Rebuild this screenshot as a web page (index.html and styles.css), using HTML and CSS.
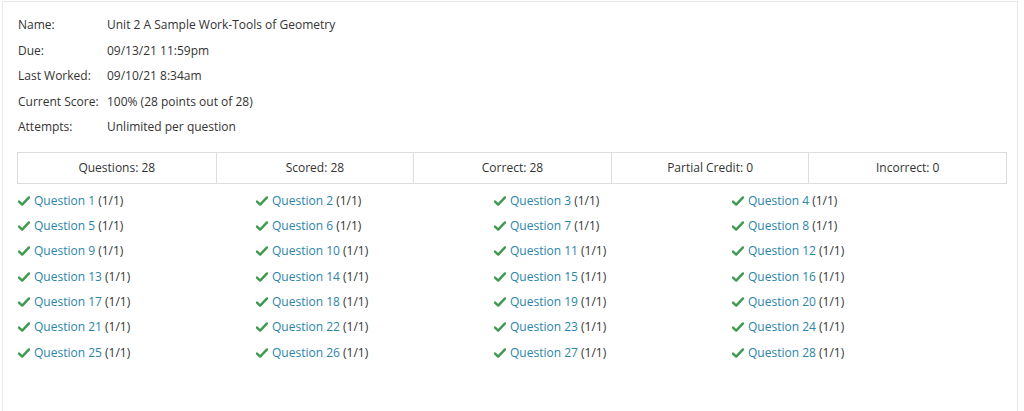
FILE: index.html
```html
<!DOCTYPE html>
<html>
<head>
<meta charset="utf-8">
<link rel="stylesheet" href="styles.css">
</head>
<body>
<div class="panel">
  <div class="info">
    <div class="row"><span class="label">Name:</span><span class="value">Unit 2 A Sample Work-Tools of Geometry</span></div>
    <div class="row"><span class="label">Due:</span><span class="value">09/13/21 11:59pm</span></div>
    <div class="row"><span class="label">Last Worked:</span><span class="value">09/10/21 8:34am</span></div>
    <div class="row"><span class="label">Current Score:</span><span class="value">100% (28 points out of 28)</span></div>
    <div class="row"><span class="label">Attempts:</span><span class="value">Unlimited per question</span></div>
  </div>
  <div class="summary">
    <div class="cell">Questions: 28</div>
    <div class="cell">Scored: 28</div>
    <div class="cell">Correct: 28</div>
    <div class="cell">Partial Credit: 0</div>
    <div class="cell">Incorrect: 0</div>
  </div>
  <div class="questions">
    <div class="item"><svg class="check" viewBox="0 0 12 10"><path d="M1 5.6 L4.2 8.6 L11 1.4"/></svg><a class="qlink" href="#">Question 1</a> <span>(1/1)</span></div>
    <div class="item"><svg class="check" viewBox="0 0 12 10"><path d="M1 5.6 L4.2 8.6 L11 1.4"/></svg><a class="qlink" href="#">Question 2</a> <span>(1/1)</span></div>
    <div class="item"><svg class="check" viewBox="0 0 12 10"><path d="M1 5.6 L4.2 8.6 L11 1.4"/></svg><a class="qlink" href="#">Question 3</a> <span>(1/1)</span></div>
    <div class="item"><svg class="check" viewBox="0 0 12 10"><path d="M1 5.6 L4.2 8.6 L11 1.4"/></svg><a class="qlink" href="#">Question 4</a> <span>(1/1)</span></div>
    <div class="item"><svg class="check" viewBox="0 0 12 10"><path d="M1 5.6 L4.2 8.6 L11 1.4"/></svg><a class="qlink" href="#">Question 5</a> <span>(1/1)</span></div>
    <div class="item"><svg class="check" viewBox="0 0 12 10"><path d="M1 5.6 L4.2 8.6 L11 1.4"/></svg><a class="qlink" href="#">Question 6</a> <span>(1/1)</span></div>
    <div class="item"><svg class="check" viewBox="0 0 12 10"><path d="M1 5.6 L4.2 8.6 L11 1.4"/></svg><a class="qlink" href="#">Question 7</a> <span>(1/1)</span></div>
    <div class="item"><svg class="check" viewBox="0 0 12 10"><path d="M1 5.6 L4.2 8.6 L11 1.4"/></svg><a class="qlink" href="#">Question 8</a> <span>(1/1)</span></div>
    <div class="item"><svg class="check" viewBox="0 0 12 10"><path d="M1 5.6 L4.2 8.6 L11 1.4"/></svg><a class="qlink" href="#">Question 9</a> <span>(1/1)</span></div>
    <div class="item"><svg class="check" viewBox="0 0 12 10"><path d="M1 5.6 L4.2 8.6 L11 1.4"/></svg><a class="qlink" href="#">Question 10</a> <span>(1/1)</span></div>
    <div class="item"><svg class="check" viewBox="0 0 12 10"><path d="M1 5.6 L4.2 8.6 L11 1.4"/></svg><a class="qlink" href="#">Question 11</a> <span>(1/1)</span></div>
    <div class="item"><svg class="check" viewBox="0 0 12 10"><path d="M1 5.6 L4.2 8.6 L11 1.4"/></svg><a class="qlink" href="#">Question 12</a> <span>(1/1)</span></div>
    <div class="item"><svg class="check" viewBox="0 0 12 10"><path d="M1 5.6 L4.2 8.6 L11 1.4"/></svg><a class="qlink" href="#">Question 13</a> <span>(1/1)</span></div>
    <div class="item"><svg class="check" viewBox="0 0 12 10"><path d="M1 5.6 L4.2 8.6 L11 1.4"/></svg><a class="qlink" href="#">Question 14</a> <span>(1/1)</span></div>
    <div class="item"><svg class="check" viewBox="0 0 12 10"><path d="M1 5.6 L4.2 8.6 L11 1.4"/></svg><a class="qlink" href="#">Question 15</a> <span>(1/1)</span></div>
    <div class="item"><svg class="check" viewBox="0 0 12 10"><path d="M1 5.6 L4.2 8.6 L11 1.4"/></svg><a class="qlink" href="#">Question 16</a> <span>(1/1)</span></div>
    <div class="item"><svg class="check" viewBox="0 0 12 10"><path d="M1 5.6 L4.2 8.6 L11 1.4"/></svg><a class="qlink" href="#">Question 17</a> <span>(1/1)</span></div>
    <div class="item"><svg class="check" viewBox="0 0 12 10"><path d="M1 5.6 L4.2 8.6 L11 1.4"/></svg><a class="qlink" href="#">Question 18</a> <span>(1/1)</span></div>
    <div class="item"><svg class="check" viewBox="0 0 12 10"><path d="M1 5.6 L4.2 8.6 L11 1.4"/></svg><a class="qlink" href="#">Question 19</a> <span>(1/1)</span></div>
    <div class="item"><svg class="check" viewBox="0 0 12 10"><path d="M1 5.6 L4.2 8.6 L11 1.4"/></svg><a class="qlink" href="#">Question 20</a> <span>(1/1)</span></div>
    <div class="item"><svg class="check" viewBox="0 0 12 10"><path d="M1 5.6 L4.2 8.6 L11 1.4"/></svg><a class="qlink" href="#">Question 21</a> <span>(1/1)</span></div>
    <div class="item"><svg class="check" viewBox="0 0 12 10"><path d="M1 5.6 L4.2 8.6 L11 1.4"/></svg><a class="qlink" href="#">Question 22</a> <span>(1/1)</span></div>
    <div class="item"><svg class="check" viewBox="0 0 12 10"><path d="M1 5.6 L4.2 8.6 L11 1.4"/></svg><a class="qlink" href="#">Question 23</a> <span>(1/1)</span></div>
    <div class="item"><svg class="check" viewBox="0 0 12 10"><path d="M1 5.6 L4.2 8.6 L11 1.4"/></svg><a class="qlink" href="#">Question 24</a> <span>(1/1)</span></div>
    <div class="item"><svg class="check" viewBox="0 0 12 10"><path d="M1 5.6 L4.2 8.6 L11 1.4"/></svg><a class="qlink" href="#">Question 25</a> <span>(1/1)</span></div>
    <div class="item"><svg class="check" viewBox="0 0 12 10"><path d="M1 5.6 L4.2 8.6 L11 1.4"/></svg><a class="qlink" href="#">Question 26</a> <span>(1/1)</span></div>
    <div class="item"><svg class="check" viewBox="0 0 12 10"><path d="M1 5.6 L4.2 8.6 L11 1.4"/></svg><a class="qlink" href="#">Question 27</a> <span>(1/1)</span></div>
    <div class="item"><svg class="check" viewBox="0 0 12 10"><path d="M1 5.6 L4.2 8.6 L11 1.4"/></svg><a class="qlink" href="#">Question 28</a> <span>(1/1)</span></div>
  </div>
</div>
</body>
</html>
```
FILE: styles.css
```css
html, body {
  margin: 0;
  padding: 0;
  background: #ffffff;
}
body {
  font-family: "Open Sans", "Liberation Sans", sans-serif;
  font-size: 12px;
  color: #333333;
}
.panel {
  margin: 1px 6px 0 2px;
  border: 1px solid #e8e8e8;
  height: 420px;
  padding: 14px 10px 0 14px;
  box-sizing: border-box;
}
.info {
  display: flex;
  flex-direction: column;
}
.row {
  display: flex;
  height: 25.5px;
  line-height: 17px;
}
.label {
  width: 89px;
  padding-left: 1px;
}
.summary {
  display: grid;
  grid-template-columns: repeat(5, 1fr);
  border: 1px solid #dddddd;
  margin-top: 8px;
  height: 32px;
  box-sizing: border-box;
}
.cell {
  border-left: 1px solid #dddddd;
  display: flex;
  align-items: center;
  justify-content: center;
}
.cell:first-child {
  border-left: none;
}
.questions {
  display: grid;
  grid-template-columns: repeat(4, 238px);
  grid-auto-rows: 17px;
  row-gap: 8.4px;
  margin-top: 8px;
  padding-left: 1px;
}
.item {
  line-height: 17px;
  height: 17px;
  white-space: nowrap;
}
.check {
  width: 12px;
  height: 10px;
  margin-right: 4px;
  vertical-align: -1px;
}
.check path {
  fill: none;
  stroke: #3d9a4f;
  stroke-width: 2.4;
  stroke-linecap: round;
  stroke-linejoin: round;
}
.qlink {
  color: #2a85a8;
  text-decoration: none;
}
```
